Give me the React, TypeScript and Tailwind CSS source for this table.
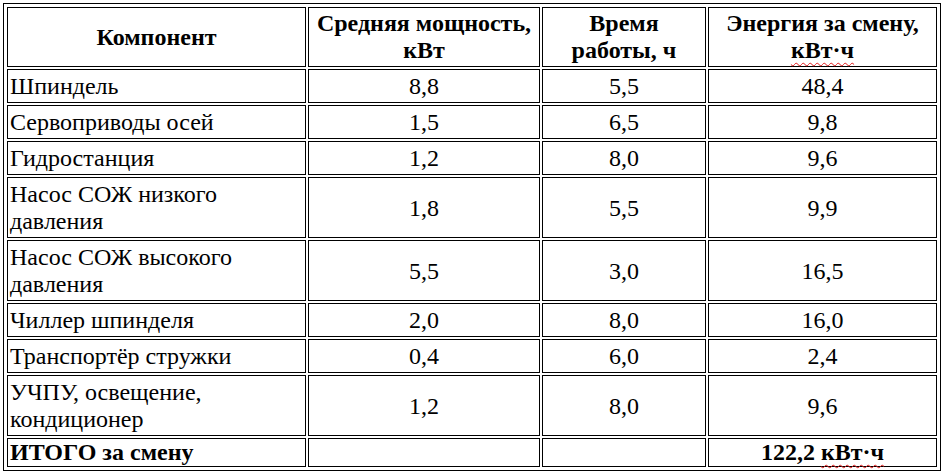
import React from "react";

type Row = {
  name: string;
  power: string;
  hours: string;
  energy: string;
};

const rows: Row[] = [
  { name: "Шпиндель", power: "8,8", hours: "5,5", energy: "48,4" },
  { name: "Сервоприводы осей", power: "1,5", hours: "6,5", energy: "9,8" },
  { name: "Гидростанция", power: "1,2", hours: "8,0", energy: "9,6" },
  { name: "Насос СОЖ низкого давления", power: "1,8", hours: "5,5", energy: "9,9" },
  { name: "Насос СОЖ высокого давления", power: "5,5", hours: "3,0", energy: "16,5" },
  { name: "Чиллер шпинделя", power: "2,0", hours: "8,0", energy: "16,0" },
  { name: "Транспортёр стружки", power: "0,4", hours: "6,0", energy: "2,4" },
  { name: "УЧПУ, освещение, кондиционер", power: "1,2", hours: "8,0", energy: "9,6" },
];

// красная волнистая линия, как у проверки орфографии в Word
const Spell = ({ children }: { children: React.ReactNode }) => (
  <span className="underline decoration-wavy decoration-[#e01b1b] decoration-1 underline-offset-[4px]">
    {children}
  </span>
);

const cell = "font-['Liberation_Serif']! border border-black px-[2px] pt-[3px] pb-[2px] text-[24px] leading-[27px] align-middle";
const head = "font-['Liberation_Serif']! border border-black px-[2px] py-[2px] text-[24px] leading-[27px] font-bold text-center align-middle";
const total = "font-['Liberation_Serif']! border border-black px-[2px] py-0 text-[24px] leading-[27px] font-bold";

export default function App() {
  return (
    <div className="font-['Liberation_Serif'] w-[944px] h-[472px] bg-white text-black p-[3px]">
      <table className="font-['Liberation_Serif']! table-fixed w-[938px] border-separate border-spacing-[2px] border border-black p-[1px]">
        <thead>
          <tr>
            <th className={`${head} w-[299px]`}>Компонент</th>
            <th className={`${head} w-[232px]`}>
              Средняя мощность,
              <br />
              кВт
            </th>
            <th className={`${head} w-[164px]`}>
              Время
              <br />
              работы, ч
            </th>
            <th className={`${head} w-[229px]`}>
              Энергия за смену,
              <br />
              <Spell>кВт·ч</Spell>
            </th>
          </tr>
        </thead>
        <tbody>
          {rows.map((r) => (
            <tr key={r.name}>
              <td className={`${cell} text-left`}>{r.name}</td>
              <td className={`${cell} text-center`}>{r.power}</td>
              <td className={`${cell} text-center`}>{r.hours}</td>
              <td className={`${cell} text-center`}>{r.energy}</td>
            </tr>
          ))}
          <tr>
            <td className={`${total} text-left`}>ИТОГО за смену</td>
            <td className={total}></td>
            <td className={total}></td>
            <td className={`${total} text-center`}>
              122,2 <Spell>кВт·ч</Spell>
            </td>
          </tr>
        </tbody>
      </table>
    </div>
  );
}
